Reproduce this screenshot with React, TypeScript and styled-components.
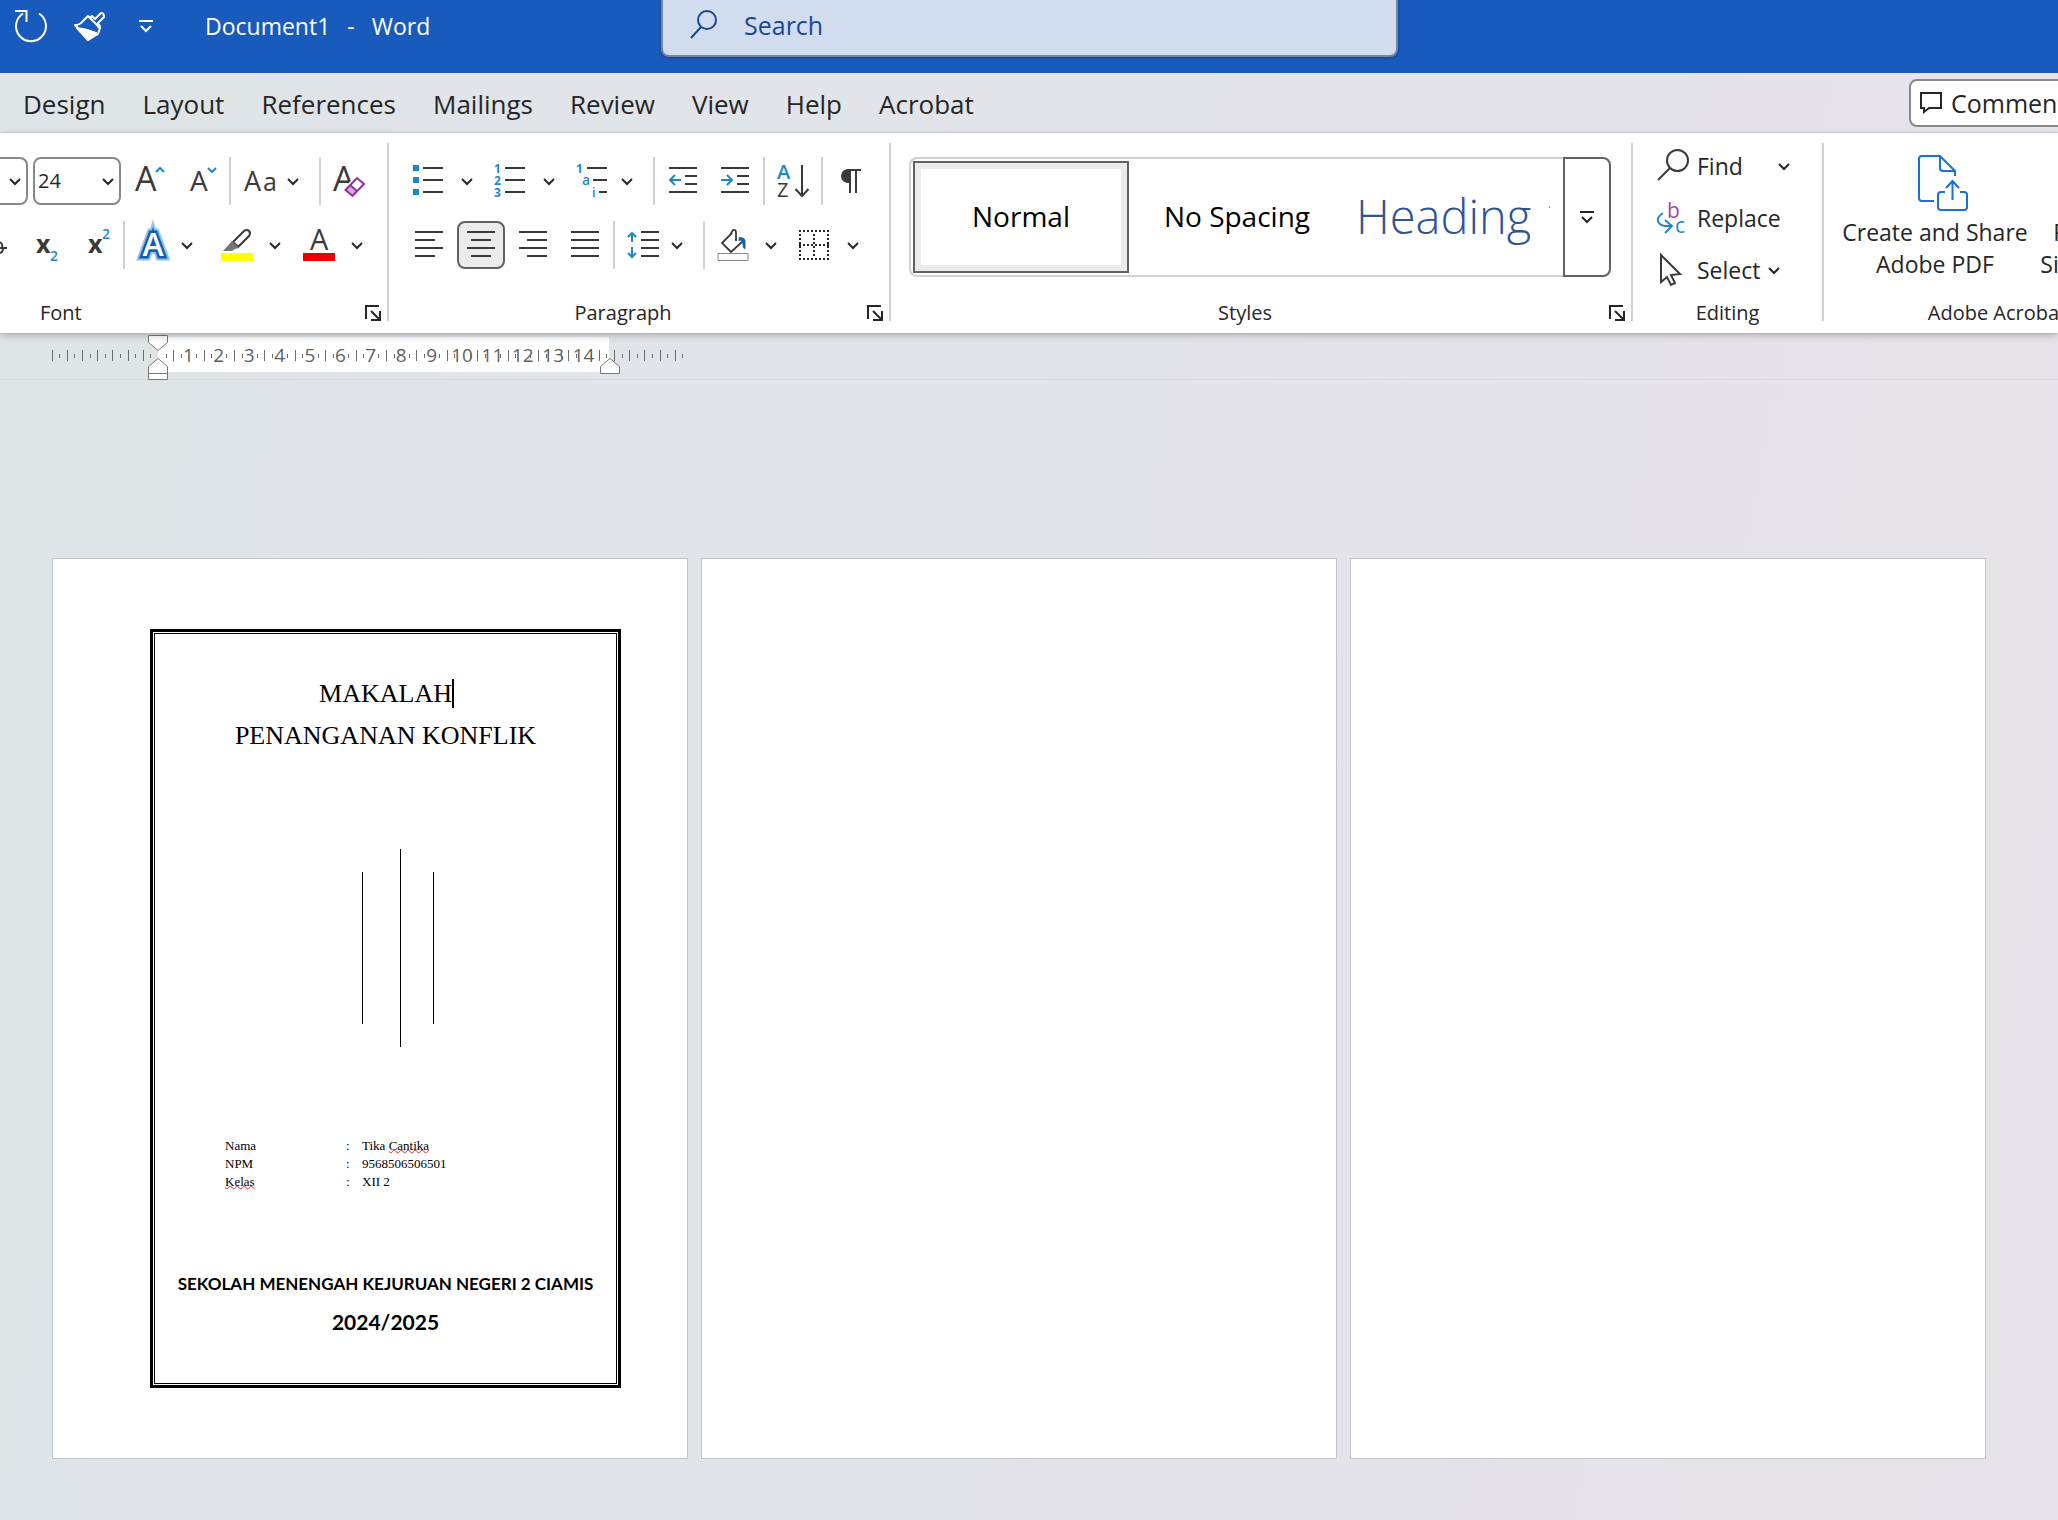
import React from "react";
import styled, { createGlobalStyle, css } from "styled-components";

const UI = `"Open Sans", "Noto Sans", sans-serif`;
const INK = "#262626";
const ICON = "#3b3a39";
const BLUE = "#1e87c8";

const GlobalStyle = createGlobalStyle`
  *, *::before, *::after { box-sizing: border-box; }
  html, body { margin: 0; padding: 0; }
  body { font-family: ${UI}; color: ${INK}; background: #e2e4e9; overflow-x: hidden; }
  button, input, select { font: inherit; color: inherit; margin: 0; }
  svg { display: block; overflow: visible; flex: none; }
`;

/* ---------- shell ---------- */

const Window = styled.div`
  min-height: 100vh;
  overflow: hidden;
  display: flex;
  flex-direction: column;
  background: linear-gradient(100deg, #dfe4e7 0%, #e2e4ea 45%, #e5e3e9 75%, #e8e3ea 100%);
`;

const TitleBar = styled.header`
  display: flex;
  align-items: flex-start;
  height: 73px;
  background: #195abd;
  color: #fff;
`;

const QuickAccess = styled.div`
  display: flex;
  align-items: center;
  gap: 27px;
  height: 52px;
  padding-left: 15px;
`;

const BareButton = styled.button`
  display: flex;
  align-items: center;
  padding: 0;
  border: 0;
  background: none;
  cursor: pointer;
`;

const DocTitle = styled.h1`
  display: flex;
  flex: none;
  gap: 17px;
  width: 507px;
  margin: 0;
  padding-left: 51px;
  font-size: 23px;
  font-weight: 400;
  line-height: 52px;
`;

const SearchBox = styled.label`
  display: flex;
  align-items: center;
  flex: none;
  gap: 27px;
  width: 737px;
  height: 59px;
  margin-top: -2px;
  padding: 0 27px 3px;
  border: 2px solid #75879f;
  border-top: 0;
  border-radius: 0 0 8px 8px;
  background: #d1dcee;
  color: #1d4690;
  box-shadow: 0 1px 3px rgba(0, 0, 0, 0.25);
`;

const SearchInput = styled.input`
  flex: 1;
  min-width: 0;
  padding: 0;
  border: 0;
  outline: 0;
  background: none;
  font-size: 25px;
  line-height: 32px;
  &::placeholder { color: #1d4690; opacity: 1; }
`;

const TabBar = styled.nav`
  display: flex;
  align-items: center;
  height: 60px;
  padding: 1px 0 0 23px;
  gap: 37px;
`;

const Tab = styled.a`
  flex: none;
  color: ${INK};
  font-size: 26px;
  line-height: 32px;
  text-decoration: none;
`;

const CommentsButton = styled.button`
  display: flex;
  align-items: center;
  flex: none;
  gap: 9px;
  width: 172px;
  height: 48px;
  margin: 0 -23px 1px auto;
  padding: 0 9px;
  border: 2px solid #8a8886;
  border-radius: 8px;
  background: #fff;
  font-size: 25px;
  line-height: 32px;
`;

/* ---------- ribbon ---------- */

const Ribbon = styled.section`
  position: relative;
  z-index: 1;
  display: flex;
  height: 200px;
  padding: 10px 0 12px;
  background: #fff;
  box-shadow: 0 0 2px rgba(0, 0, 0, 0.22), 0 3px 8px rgba(0, 0, 0, 0.2);
`;

const Group = styled.section<{ $w: number; $last?: boolean }>`
  display: flex;
  flex: none;
  flex-direction: column;
  width: ${(p) => p.$w}px;
  ${(p) => !p.$last && css`border-right: 2px solid #d1d1d1;`}
`;

const ToolRows = styled.div<{ $pl?: number }>`
  display: flex;
  flex: 1;
  flex-direction: column;
  gap: 16px;
  padding: 14px 0 0 ${(p) => p.$pl ?? 0}px;
`;

const ToolRow = styled.div`
  display: flex;
  align-items: center;
  height: 48px;
`;

const Tool = styled.button<{ $ml?: number; $gap?: number }>`
  display: flex;
  align-items: center;
  flex: none;
  gap: ${(p) => p.$gap ?? 0}px;
  margin-left: ${(p) => p.$ml ?? 0}px;
  padding: 0;
  border: 0;
  background: none;
  cursor: pointer;
`;

const PressedTool = styled(Tool)`
  justify-content: center;
  width: 48px;
  height: 48px;
  border: 2px solid #616161;
  border-radius: 8px;
  background: #ebebeb;
`;

const Separator = styled.span<{ $ml: number }>`
  flex: none;
  width: 2px;
  height: 48px;
  margin-left: ${(p) => p.$ml}px;
  background: #d1d1d1;
`;

const Combo = styled.div<{ $w: number; $ml: number }>`
  position: relative;
  flex: none;
  width: ${(p) => p.$w}px;
  height: 48px;
  margin-left: ${(p) => p.$ml}px;
  border: 2px solid #8a8886;
  border-radius: 8px;
  background: #fff;
  & > svg {
    position: absolute;
    right: 5px;
    top: 16px;
    pointer-events: none;
  }
`;

const ComboSelect = styled.select`
  appearance: none;
  width: 100%;
  height: 44px;
  padding: 0 30px 2px 3px;
  border: 0;
  outline: 0;
  background: none;
  font-size: 20px;
`;

const GroupFooter = styled.footer<{ $start?: number }>`
  display: flex;
  height: 16px;
  padding-right: 6px;
  padding-left: ${(p) => p.$start ?? 0}px;
`;

const GroupLabel = styled.h2<{ $start?: boolean }>`
  flex: 1;
  margin: 0 10px 0 0;
  font-size: 20px;
  font-weight: 400;
  line-height: 16px;
  text-align: ${(p) => (p.$start ? "left" : "center")};
  white-space: nowrap;
`;

const PlainLabel = styled(GroupLabel)`
  flex: none;
  height: 16px;
  margin: 0;
`;

const Gallery = styled.div`
  display: flex;
  height: 120px;
  margin: 0 20px 0 18px;
`;

const GalleryList = styled.div`
  display: flex;
  flex: none;
  padding: 2px;
  border: 2px solid #d1d1d1;
  border-right: 0;
  border-radius: 8px 0 0 8px;
`;

const StyleTile = styled.button<{ $selected?: boolean; $heading?: boolean }>`
  width: 216px;
  padding: 0 9px 2px;
  border: 2px solid ${(p) => (p.$selected ? "#616161" : "transparent")};
  background: none;
  box-shadow: ${(p) => (p.$selected ? "inset 0 0 0 6px #ebebeb" : "none")};
  color: ${(p) => (p.$heading ? "#2f5496" : "#000")};
  font-size: ${(p) => (p.$heading ? 47 : 28)}px;
  font-weight: ${(p) => (p.$heading ? 300 : 400)};
  line-height: 64px;
  white-space: nowrap;
`;

const TileText = styled.span<{ $start?: boolean }>`
  display: flex;
  justify-content: ${(p) => (p.$start ? "flex-start" : "center")};
  gap: 13px;
  overflow: hidden;
`;

const MoreButton = styled.button`
  display: flex;
  align-items: center;
  justify-content: center;
  width: 48px;
  padding: 0;
  border: 2px solid #616161;
  border-radius: 0 8px 8px 0;
  background: none;
`;

const EditList = styled.div`
  display: flex;
  flex: 1;
  flex-direction: column;
  margin-top: -3px;
  padding-left: 24px;
`;

const EditButton = styled.button`
  display: grid;
  grid-template-columns: 40px auto auto;
  align-items: center;
  justify-content: start;
  height: 52px;
  padding: 0;
  border: 0;
  background: none;
  font-size: 23px;
  line-height: 32px;
`;

const CaretSlot = styled.span<{ $wide?: boolean }>`
  padding-left: ${(p) => (p.$wide ? 35 : 8)}px;
`;

const BigButtons = styled.div`
  display: flex;
  flex: 1;
  gap: 7px;
  padding: 12px 0 0 16px;
`;

const BigButton = styled.button<{ $w: number }>`
  display: flex;
  flex: none;
  flex-direction: column;
  align-items: center;
  gap: 5px;
  width: ${(p) => p.$w}px;
  padding: 0;
  border: 0;
  background: none;
  font-size: 23px;
  line-height: 32px;
  white-space: nowrap;
`;

/* ---------- ruler and pages ---------- */

const RulerBar = styled.div`
  height: 47px;
  padding-left: 52px;
  border-bottom: 1px solid #d2d5d9;
`;

const Canvas = styled.main`
  display: flex;
  flex: 1;
  align-items: flex-start;
  gap: 13px;
  padding: 178px 0 61px 52px;
`;

const Page = styled.article`
  flex: none;
  width: 636px;
  height: 901px;
  padding: 70px 66px 70px 97px;
  border: 1px solid #c3c6ca;
  background: #fff;
`;

const CoverFrame = styled.div`
  height: 100%;
  padding: 1px;
  border: 3px solid #000;
`;

const Cover = styled.div`
  display: flex;
  flex-direction: column;
  height: 100%;
  padding-top: 39px;
  border: 1px solid #000;
  color: #000;
  font-family: "Liberation Serif", "Times New Roman", serif;
`;

const CoverTitle = styled.p`
  margin: 0;
  font-size: 26px;
  line-height: 42px;
  text-align: center;
`;

const TextCursor = styled.span`
  display: inline-block;
  width: 2px;
  height: 29px;
  margin-right: -2px;
  background: #000;
  vertical-align: -6px;
`;

const Strokes = styled.div`
  display: grid;
  grid-template-columns: 38px 33px 1px;
  align-items: center;
  margin: 92px 0 90px;
  padding-left: 207px;
`;

const Stroke = styled.span<{ $h: number }>`
  width: 1px;
  height: ${(p) => p.$h}px;
  background: #000;
`;

const Details = styled.table`
  margin-left: 70px;
  border-collapse: collapse;
  font-size: 13px;
  line-height: 18px;
  text-align: left;
  th, td { padding: 0; font-weight: 400; }
  th { width: 121px; }
  td:nth-child(2) { width: 16px; }
`;

const Misspelt = styled.span`
  text-decoration: underline wavy #d13438 1px;
  text-underline-offset: -1px;
  text-decoration-skip-ink: none;
`;

const School = styled.p<{ $year?: boolean }>`
  margin: 0;
  font-family: Lato, "Open Sans", sans-serif;
  font-size: ${(p) => (p.$year ? 21 : 17)}px;
  font-weight: 700;
  line-height: 38px;
  text-align: center;
`;

const SchoolBlock = styled.div`
  padding-top: 74px;
`;

/* ---------- icons ---------- */

type IconProps = { w: number; h?: number; children: React.ReactNode };

const Icon = ({ w, h = 32, children }: IconProps) => (
  <svg width={w} height={h} viewBox={`0 0 ${w} ${h}`} fill="none" stroke={ICON} strokeWidth="2" aria-hidden="true">
    {children}
  </svg>
);

type GlyphProps = { x: number; y: number; size: number; color?: string; weight?: number; children: string };

const Glyph = ({ x, y, size, color = ICON, weight = 400, children }: GlyphProps) => (
  <text x={x} y={y} fontSize={size} fontWeight={weight} fill={color} stroke="none" fontFamily={UI}>
    {children}
  </text>
);

const Caret = () => (
  <Icon w={12} h={12}>
    <path d="M1 4l5 5 5-5" stroke={INK} />
  </Icon>
);

const MoreCaret = () => (
  <Icon w={14} h={12}>
    <path d="M0 1h14M2 6l5 5 5-5" stroke={INK} />
  </Icon>
);

const Launcher = ({ label }: { label: string }) => (
  <BareButton aria-label={label}>
    <Icon w={16} h={16}>
      <path d="M1 14V1h13M6 15h9V6M6 6l8 8" stroke={INK} />
    </Icon>
  </BareButton>
);

/* Horizontal strokes, each given as [x1, x2, y]. */
const Lines = ({ at }: { at: number[][] }) => (
  <path d={at.map(([a, b, y]) => `M${a} ${y}H${b}`).join("")} />
);

/* ---------- ruler ---------- */

const CM = 30.4;
const ORIGIN = 106;

const Ruler = () => {
  const ticks: string[] = [];
  for (let q = -14; q <= 69; q++) {
    const x = Math.round(ORIGIN + (q * CM) / 4);
    const numbered = q > 0 && q < 60 && q % 4 === 0;
    if (q === 0 || numbered) continue;
    ticks.push(q % 2 === 0 ? `M${x}.5 17v11` : `M${x}.5 21v4`);
  }
  const numbers = Array.from({ length: 14 }, (_, i) => i + 1);
  return (
    <svg width="640" height="47" viewBox="0 0 640 47" role="img" aria-label="Horizontal ruler">
      <rect x="106" y="4" width="451" height="35" fill="#fff" />
      <path d={ticks.join("")} stroke="#6b6b6b" strokeWidth="1" />
      {numbers.map((n) => (
        <text key={n} x={ORIGIN + n * CM} y="29" fontSize="19" textAnchor="middle" fill="#5f5f5f" fontFamily={UI}>
          {n}
        </text>
      ))}
      <g fill="#fff" stroke="#777">
        <path d="M96.5 2.5h19v7l-9.500 8-9.500-8z" />
        <path d="M96.5 40.5v-7l9.500-8 9.500 8v7z" />
        <path d="M96.500 40.500h19v6h-19z" />
        <path d="M548.500 40.500v-7l9.500-8 9.500 8v7z" />
      </g>
    </svg>
  );
};

/* ---------- groups ---------- */

const FontGroup = () => (
  <Group $w={389}>
    <ToolRows>
      <ToolRow>
        <Combo $w={208} $ml={-180}>
          <ComboSelect aria-label="Font" defaultValue="tnr">
            <option value="tnr">Times New Roman</option>
          </ComboSelect>
          <Caret />
        </Combo>
        <Combo $w={88} $ml={5}>
          <ComboSelect aria-label="Font size" defaultValue="24">
            <option value="24">24</option>
          </ComboSelect>
          <Caret />
        </Combo>
        <Tool $ml={14} aria-label="Increase font size">
          <Icon w={30}>
            <Glyph x={0} y={26} size={34}>A</Glyph>
            <path d="M21 7l4-4 4 4" stroke={BLUE} />
          </Icon>
        </Tool>
        <Tool $ml={25} aria-label="Decrease font size">
          <Icon w={27}>
            <Glyph x={0} y={26} size={28}>A</Glyph>
            <path d="M18 3l4 4 4-4" stroke={BLUE} />
          </Icon>
        </Tool>
        <Separator $ml={12} />
        <Tool $ml={13} $gap={11} aria-label="Change case">
          <Icon w={32}>
            <Glyph x={0} y={26} size={27}>A</Glyph>
            <Glyph x={19} y={26} size={25}>a</Glyph>
          </Icon>
          <Caret />
        </Tool>
        <Separator $ml={20} />
        <Tool $ml={12} aria-label="Clear all formatting">
          <Icon w={32}>
            <Glyph x={0} y={26} size={34}>A</Glyph>
            <path d="M24 13l7 6-11.500 12-7-6z" fill="#fff" stroke="#fff" strokeWidth="5" />
            <path d="M17 20l7 6-4.500 5-7-6z" fill="#dda5e3" stroke="none" />
            <path d="M24 13l7 6-11.500 12-7-6zM17 20l7 6" stroke="#902f9c" />
          </Icon>
        </Tool>
      </ToolRow>
      <ToolRow>
        <Tool aria-label="Strikethrough">
          <Icon w={7}>
            <path d="M0 19h7M0 13q3 2 2 5M0 24q3-1 3-4" />
          </Icon>
        </Tool>
        <Tool $ml={29} aria-label="Subscript">
          <Icon w={22}>
            <Glyph x={0} y={24} size={25} weight={700}>x</Glyph>
            <Glyph x={14} y={32} size={14} weight={600} color={BLUE}>2</Glyph>
          </Icon>
        </Tool>
        <Tool $ml={30} aria-label="Superscript">
          <Icon w={22}>
            <Glyph x={0} y={24} size={25} weight={700}>x</Glyph>
            <Glyph x={14} y={10} size={14} weight={600} color={BLUE}>2</Glyph>
          </Icon>
        </Tool>
        <Separator $ml={13} />
        <Tool $ml={12} $gap={12} aria-label="Text effects and typography">
          <Icon w={32}>
            <g fontFamily={UI} fontSize="32" fontWeight="600" textAnchor="middle">
              <text x="16" y="27" stroke="#8fc3ec" strokeWidth="9">A</text>
              <text x="16" y="27" fill="#fff" stroke="#0f5ea8" strokeWidth="5">A</text>
              <text x="16" y="27" fill="#fff" stroke="none">A</text>
            </g>
          </Icon>
          <Caret />
        </Tool>
        <Tool $ml={28} $gap={16} aria-label="Text highlight color">
          <Icon w={32}>
            <path d="M0 24h32v8H0z" fill="#ff0" stroke="none" />
            <path d="M12 13L23 2q3-2 5 0t0 5L17 18z" fill="#fff" />
            <path d="M11 12l7 7-4 1-3 2H2z" fill="#767676" stroke="none" />
          </Icon>
          <Caret />
        </Tool>
        <Tool $ml={22} $gap={16} aria-label="Font color">
          <Icon w={32}>
            <Glyph x={7} y={21} size={29}>A</Glyph>
            <path d="M0 24h32v8H0z" fill="#e60000" stroke="none" />
          </Icon>
          <Caret />
        </Tool>
      </ToolRow>
    </ToolRows>
    <GroupFooter $start={40}>
      <GroupLabel $start>Font</GroupLabel>
      <Launcher label="Font settings" />
    </GroupFooter>
  </Group>
);

const ParagraphGroup = () => (
  <Group $w={502}>
    <ToolRows $pl={24}>
      <ToolRow>
        <Tool $gap={18} aria-label="Bullets">
          <Icon w={30}>
            <path d="M0 0h6v6H0zM0 12h6v6H0zM0 24h6v6H0z" fill={BLUE} stroke="none" />
            <Lines at={[[10, 30, 3], [10, 30, 15], [10, 30, 27]]} />
          </Icon>
          <Caret />
        </Tool>
        <Tool $ml={22} $gap={18} aria-label="Numbering">
          <Icon w={30}>
            <Glyph x={-1} y={8} size={12} weight={700} color={BLUE}>1</Glyph>
            <Glyph x={-1} y={20} size={12} weight={700} color={BLUE}>2</Glyph>
            <Glyph x={-1} y={32} size={12} weight={700} color={BLUE}>3</Glyph>
            <Lines at={[[10, 30, 3], [10, 30, 15], [10, 30, 27]]} />
          </Icon>
          <Caret />
        </Tool>
        <Tool $ml={22} $gap={14} aria-label="Multilevel list">
          <Icon w={30}>
            <Glyph x={-1} y={8} size={12} weight={700} color={BLUE}>1</Glyph>
            <Glyph x={5} y={20} size={14} weight={600} color={BLUE}>a</Glyph>
            <Glyph x={15} y={32} size={13} weight={600} color={BLUE}>i</Glyph>
            <Lines at={[[10, 30, 3], [16, 30, 15], [22, 30, 27]]} />
          </Icon>
          <Caret />
        </Tool>
        <Separator $ml={20} />
        <Tool $ml={14} aria-label="Decrease indent">
          <Icon w={28}>
            <Lines at={[[0, 28, 3], [16, 28, 11], [16, 28, 19], [0, 28, 27]]} />
            <path d="M12 15H1M6 10l-5 5 5 5" stroke={BLUE} />
          </Icon>
        </Tool>
        <Tool $ml={24} aria-label="Increase indent">
          <Icon w={28}>
            <Lines at={[[0, 28, 3], [16, 28, 11], [16, 28, 19], [0, 28, 27]]} />
            <path d="M0 15h11M6 10l5 5-5 5" stroke={BLUE} />
          </Icon>
        </Tool>
        <Separator $ml={14} />
        <Tool $ml={12} aria-label="Sort">
          <Icon w={32}>
            <Glyph x={0} y={14} size={20} weight={600} color={BLUE}>A</Glyph>
            <Glyph x={0} y={32} size={20}>Z</Glyph>
            <path d="M25 0v30M18.500 24l6.500 7 6.500-7" />
          </Icon>
        </Tool>
        <Separator $ml={12} />
        <Tool $ml={18} aria-label="Show paragraph marks">
          <Icon w={20}>
            <path d="M9 5v23M15 5v23M7 5h13" />
            <path d="M9 4H7a6.500 6.500 0 0 0 0 14h2z" fill={ICON} stroke="none" />
          </Icon>
        </Tool>
      </ToolRow>
      <ToolRow>
        <Tool $ml={2} aria-label="Align left">
          <Icon w={28}>
            <Lines at={[[0, 28, 3], [0, 20, 11], [0, 28, 19], [0, 20, 27]]} />
          </Icon>
        </Tool>
        <PressedTool $ml={14} aria-label="Center" aria-pressed="true">
          <Icon w={28}>
            <Lines at={[[0, 28, 3], [4, 24, 11], [0, 28, 19], [4, 24, 27]]} />
          </Icon>
        </PressedTool>
        <Tool $ml={14} aria-label="Align right">
          <Icon w={28}>
            <Lines at={[[0, 28, 3], [8, 28, 11], [0, 28, 19], [8, 28, 27]]} />
          </Icon>
        </Tool>
        <Tool $ml={24} aria-label="Justify">
          <Icon w={28}>
            <Lines at={[[0, 28, 3], [0, 28, 11], [0, 28, 19], [0, 28, 27]]} />
          </Icon>
        </Tool>
        <Separator $ml={14} />
        <Tool $ml={12} $gap={12} aria-label="Line and paragraph spacing">
          <Icon w={32}>
            <Lines at={[[14, 32, 3], [14, 32, 11], [14, 32, 19], [14, 32, 27]]} />
            <path d="M5 13V4M1 8l4-4 4 4M5 18v10M1 24l4 4 4-4" stroke={BLUE} />
          </Icon>
          <Caret />
        </Tool>
        <Separator $ml={20} />
        <Tool $ml={12} $gap={16} aria-label="Shading">
          <Icon w={32}>
            <path d="M1 24.500h30v7H1z" fill="#fff" stroke="#8a8886" strokeWidth="1" />
            <path d="M15 4L5 14l9 9 11-10M13 6l3-5q3-1 3 3v8" strokeWidth="1.800" />
            <path d="M22 8q6 0 6.500 4v8q-3 0-3-5-1-5-4-3z" fill="#1266a8" stroke="none" />
          </Icon>
          <Caret />
        </Tool>
        <Tool $ml={22} $gap={18} aria-label="Borders">
          <Icon w={30}>
            <path
              d="M0 2h30M0 16h30M0 30h30M1 5v24M15 5v24M29 5v24"
              stroke={INK}
              strokeDasharray="2 2"
            />
          </Icon>
          <Caret />
        </Tool>
      </ToolRow>
    </ToolRows>
    <GroupFooter>
      <GroupLabel>Paragraph</GroupLabel>
      <Launcher label="Paragraph settings" />
    </GroupFooter>
  </Group>
);

const StylesGroup = () => (
  <Group $w={742}>
    <ToolRows>
      <Gallery>
        <GalleryList>
          <StyleTile $selected>
            <TileText>Normal</TileText>
          </StyleTile>
          <StyleTile>
            <TileText>No Spacing</TileText>
          </StyleTile>
          <StyleTile $heading>
            <TileText $start>
              <span>Heading</span>
              <span>1</span>
            </TileText>
          </StyleTile>
        </GalleryList>
        <MoreButton aria-label="More styles">
          <MoreCaret />
        </MoreButton>
      </Gallery>
    </ToolRows>
    <GroupFooter>
      <GroupLabel>Styles</GroupLabel>
      <Launcher label="Styles pane" />
    </GroupFooter>
  </Group>
);

const EditingGroup = () => (
  <Group $w={191}>
    <EditList>
      <EditButton>
        <Icon w={31}>
          <circle cx="20.500" cy="10.500" r="10.500" fill="#fafafa" />
          <path d="M13 18L1 30" />
        </Icon>
        Find
        <CaretSlot $wide>
          <Caret />
        </CaretSlot>
      </EditButton>
      <EditButton>
        <Icon w={29}>
          <Glyph x={10} y={16} size={21} color="#a349ad">b</Glyph>
          <Glyph x={18} y={31} size={21} color={BLUE}>c</Glyph>
          <path d="M6 11q-6 4-5 8t7 5h7M8 18l7 6-7 7" stroke={BLUE} />
        </Icon>
        Replace
      </EditButton>
      <EditButton>
        <Icon w={29}>
          <path d="M4 1v27l6-5 4 8 4-2-4-8 9-1z" fill="#fff" />
        </Icon>
        Select
        <CaretSlot>
          <Caret />
        </CaretSlot>
      </EditButton>
    </EditList>
    <PlainLabel>Editing</PlainLabel>
  </Group>
);

const AcrobatGroup = () => (
  <Group $w={346} $last>
    <BigButtons>
      <BigButton $w={190}>
        <Icon w={66} h={56}>
          <g stroke="#1a6fd8" transform="translate(16 0)">
            <path d="M16 46H4q-3 0-3-3V4q0-3 3-3h18l15 15v5M22 1v12q0 3 3 3h12" />
            <path d="M27 37h-4q-3 0-3 3v12q0 3 3 3h23q3 0 3-3V40q0-3-3-3h-4M34.500 45V27M28 33l6.500-7 6.500 7" />
          </g>
        </Icon>
        <span>
          Create and Share
          <br />
          Adobe PDF
        </span>
      </BigButton>
      <BigButton $w={120}>
        <Icon w={50} h={56}>
          <path d="M1 1h32v54H1z" stroke="#1a6fd8" />
        </Icon>
        <span>
          Request
          <br />
          Signatures
        </span>
      </BigButton>
    </BigButtons>
    <PlainLabel>Adobe Acrobat</PlainLabel>
  </Group>
);

const tabs = ["Design", "Layout", "References", "Mailings", "Review", "View", "Help", "Acrobat"];

export default function App() {
  return (
    <Window>
      <GlobalStyle />
      <TitleBar>
        <QuickAccess>
          <BareButton aria-label="Redo">
            <Icon w={32} h={32}>
              <path d="M24 3.500A15 15 0 1 1 8 3.500M0 1h11.500v11" stroke="#fff" />
            </Icon>
          </BareButton>
          <BareButton aria-label="Format painter">
            <Icon w={31} h={31}>
              <g stroke="#fff" strokeLinejoin="round">
                <path d="M1 14q5 0 8-4l5-5 12 12-2 6-10 6z" />
                <path d="M3 17q9 1 19 5l-8 7z" fill="#fff" />
                <path d="M16 7l2-2 3 3 6-6q3 0 3 4l-6 6 2 3-2 2" />
              </g>
            </Icon>
          </BareButton>
          <BareButton aria-label="Customize quick access toolbar">
            <Icon w={22} h={12}>
              <path d="M7 1h14M9 6l5 5 5-5" stroke="#fff" />
            </Icon>
          </BareButton>
        </QuickAccess>
        <DocTitle>
          <span>Document1</span>
          <span>-</span>
          <span>Word</span>
        </DocTitle>
        <SearchBox>
          <Icon w={27} h={30}>
            <g stroke="#1d4690">
              <circle cx="17" cy="10" r="9" />
              <path d="M11 17L1 28" />
            </g>
          </Icon>
          <SearchInput type="text" placeholder="Search" aria-label="Search" />
        </SearchBox>
      </TitleBar>

      <TabBar aria-label="Ribbon tabs">
        {tabs.map((t) => (
          <Tab key={t} href={`#${t.toLowerCase()}`}>
            {t}
          </Tab>
        ))}
        <CommentsButton>
          <Icon w={22} h={22}>
            <path d="M1 1h20v15H9l-5 4v-4H1z" stroke={INK} />
          </Icon>
          Comments
        </CommentsButton>
      </TabBar>

      <Ribbon aria-label="Home ribbon">
        <FontGroup />
        <ParagraphGroup />
        <StylesGroup />
        <EditingGroup />
        <AcrobatGroup />
      </Ribbon>

      <RulerBar>
        <Ruler />
      </RulerBar>

      <Canvas>
        <Page>
          <CoverFrame>
            <Cover>
              <CoverTitle>
                MAKALAH
                <TextCursor />
              </CoverTitle>
              <CoverTitle>PENANGANAN KONFLIK</CoverTitle>
              <Strokes>
                <Stroke $h={152} />
                <Stroke $h={198} />
                <Stroke $h={152} />
              </Strokes>
              <Details>
                <tbody>
                  <tr>
                    <th scope="row">Nama</th>
                    <td>:</td>
                    <td>
                      Tika <Misspelt>Cantika</Misspelt>
                    </td>
                  </tr>
                  <tr>
                    <th scope="row">NPM</th>
                    <td>:</td>
                    <td>9568506506501</td>
                  </tr>
                  <tr>
                    <th scope="row">
                      <Misspelt>Kelas</Misspelt>
                    </th>
                    <td>:</td>
                    <td>XII 2</td>
                  </tr>
                </tbody>
              </Details>
              <SchoolBlock>
                <School>SEKOLAH MENENGAH KEJURUAN NEGERI 2 CIAMIS</School>
                <School $year>2024/2025</School>
              </SchoolBlock>
            </Cover>
          </CoverFrame>
        </Page>
        <Page aria-label="Page 2" />
        <Page aria-label="Page 3" />
      </Canvas>
    </Window>
  );
}
